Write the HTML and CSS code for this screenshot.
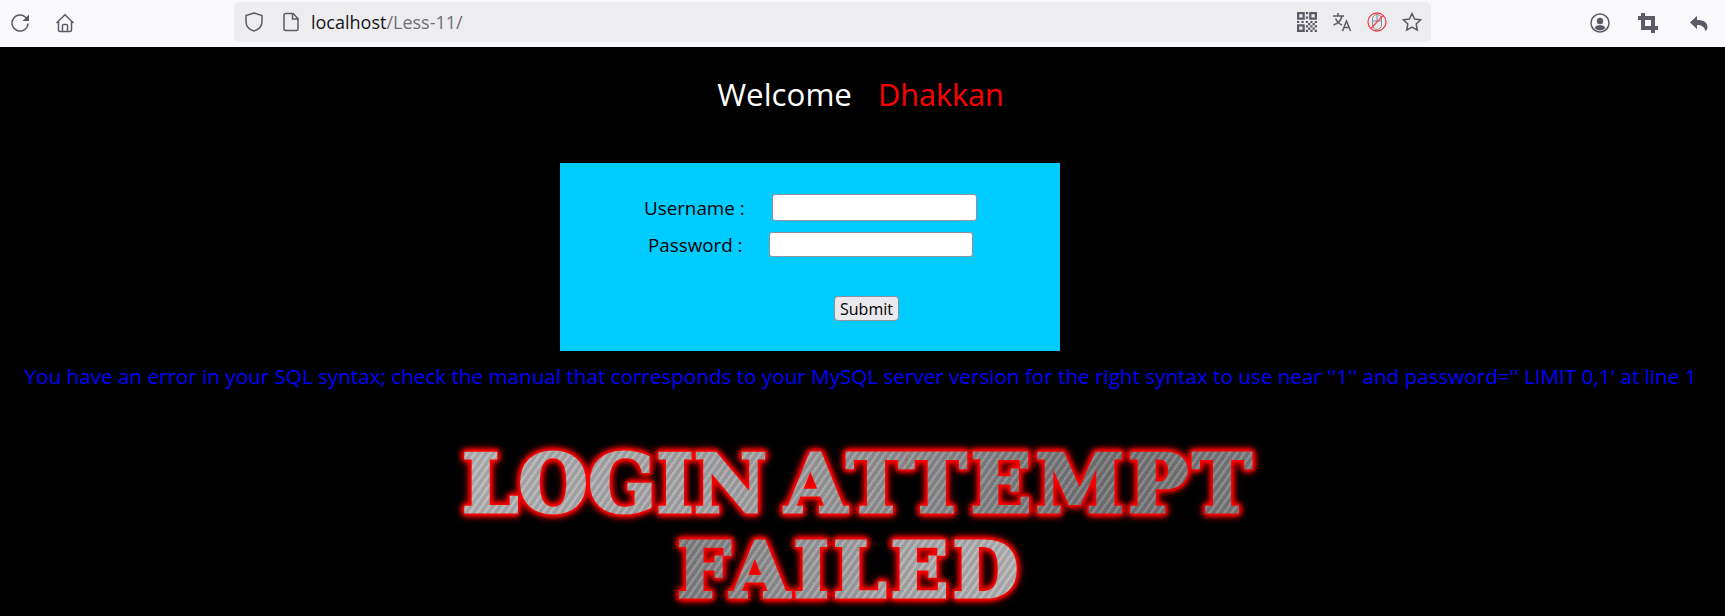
FILE: index.html
```html
<!DOCTYPE html>
<html lang="en">
<head>
    <meta charset="UTF-8">
    <title>Less-11</title>
    <link rel="stylesheet" href="styles.css">
</head>
<body>
    <div class="toolbar">
        <svg class="icon reload" viewBox="0 0 20 20"><path d="M18 10.500a8 8 0 1 1-2.500-6.300l2.500 2.300" /><path class="fill" d="M19 1.500v6.500h-6.500z" /></svg>
        <svg class="icon home" viewBox="0 0 20 20"><path d="M1.500 10 10 1.800 18.500 10M3.500 8.500V17a1.500 1.500 0 0 0 1.500 1.500h10a1.500 1.500 0 0 0 1.500-1.500V8.500M7.500 18.500V12.500a1 1 0 0 1 1-1h3a1 1 0 0 1 1 1v6" /></svg>
        <div class="urlbar">
            <svg class="icon shield" viewBox="0 0 20 20"><path d="M10 1 2 3.500v6C2 14.500 6 17.800 10 19c4-1.200 8-4.500 8-9.500v-6z" /></svg>
            <svg class="icon page" viewBox="0 0 20 20"><path d="M3 3a1.500 1.500 0 0 1 1.500-1.500H12l5 5V17a1.500 1.500 0 0 1-1.500 1.500h-11A1.500 1.500 0 0 1 3 17zM11.500 1.500V7H17" /></svg>
            <span class="url">localhost<span class="url-path">/Less-11/</span></span>
            <div class="url-actions">
                <svg class="icon" viewBox="0 0 18 18"><path class="qr" d="M0 0h7v7H0zM2 2v3h3V2zM11 0h7v7h-7zM13 2v3h3V2zM0 11h7v7H0zM2 13v3h3v-3zM8 0h2v2H8zM8 4h2v2H8zM8 8h2v2H8zM4 8h2v2H4zM0 8h2v2H0zM12 8h2v2h-2zM16 8h2v2h-2zM8 12h2v2H8zM10 10h2v2h-2zM14 10h2v2h-2zM12 12h2v2h-2zM16 12h2v2h-2zM10 14h2v2h-2zM14 14h2v2h-2zM8 16h2v2H8zM12 16h2v2h-2zM16 16h2v2h-2z" /></svg>
                <svg class="icon translate" viewBox="0 0 20 20"><path d="M1 4h11M6 1v3M10 4c-1 4-4 7.500-8.500 9M3.500 6.500c1.500 3 4 5.500 6.500 6.500M10.500 19l4-10 4 10M12 15.500h5" /></svg>
                <svg class="icon mouse" viewBox="0 0 20 20"><rect class="mouse-body" x="5.500" y="2.500" width="9" height="15" rx="4.500" /><path class="mouse-line" d="M10 3v6M5.500 9h9" /><circle class="no-ring" cx="10" cy="10" r="9" /><path class="no-ring" d="M3.800 16.500 16.200 3.500" /></svg>
                <svg class="icon star" viewBox="0 0 20 20"><path d="m10 1.500 2.600 5.500 6 .8-4.400 4.200 1.100 6L10 15.100 4.700 18l1.100-6L1.400 7.800l6-.8z" /></svg>
            </div>
        </div>
        <svg class="icon profile" viewBox="0 0 20 20"><circle cx="10" cy="10" r="9" /><circle class="fill" cx="10" cy="8" r="3.200" /><path class="fill" d="M4.500 15c1-2 3-3 5.500-3s4.500 1 5.500 3a7.500 7.500 0 0 1-11 0z" /></svg>
        <svg class="icon crop" viewBox="0 0 20 20"><path class="thick" d="M5 0v15h15M0 5h15v15" /></svg>
        <svg class="icon back" viewBox="0 0 20 20"><path class="fill" d="M8 2 1 8.500 8 15v-4c4 0 7 1 8.500 6 1.500-1 2-2.500 2-4 0-4.500-4-7-10.500-7z" /></svg>
    </div>

    <div class="welcome">Welcome<span class="name">Dhakkan</span></div>

    <form class="login-box">
        <div class="row row-user">
            <label class="user-label">Username :</label>
            <input class="text-input user-input" type="text">
        </div>
        <div class="row row-pass">
            <label class="pass-label">Password :</label>
            <input class="text-input pass-input" type="password">
        </div>
        <input class="submit" type="submit" value="Submit">
    </form>

    <div class="sql-error">You have an error in your SQL syntax; check the manual that corresponds to your MySQL server version for the right syntax to use near ''1'' and password='' LIMIT 0,1' at line 1</div>

    <div class="failed">
        <div class="failed-line line-one">LOGIN <span class="word-attempt">ATTEMPT</span></div>
        <div class="failed-line line-two">FAILED</div>
    </div>
</body>
</html>
```

FILE: styles.css
```css
* {
    box-sizing: border-box;
}
html, body {
    height: 616px;
    overflow: hidden;
}
body {
    margin: 0;
    background-color: #000;
    font-family: "Open Sans", "Noto Sans", sans-serif;
}

/* browser bar */
.toolbar {
    height: 47px;
    background-color: #f9f9fb;
    display: flex;
    align-items: flex-start;
    padding-top: 2px;
}
.icon {
    width: 20px;
    height: 20px;
    flex: none;
    fill: none;
    stroke: #5b5b66;
    stroke-width: 1.5;
}
.icon .fill {
    fill: #5b5b66;
    stroke: none;
}
.reload {
    margin: 11px 0 0 10px;
}
.home {
    margin: 11px 0 0 25px;
}
.urlbar {
    width: 1197px;
    height: 40px;
    margin-left: 159px;
    background-color: #ededf0;
    border-radius: 5px;
    display: flex;
    align-items: center;
    padding-left: 10px;
}
.page {
    margin-left: 17px;
}
.url {
    margin-left: 10px;
    font-size: 18px;
    color: #15141a;
}
.url-path {
    color: #6f6f78;
}
.url-actions {
    margin-left: auto;
    display: flex;
    gap: 15px;
    padding-right: 9px;
}
.qr {
    fill: #5b5b66;
    stroke: none;
}
.mouse-body {
    fill: #e8e8ea;
    stroke: #8a8a92;
    stroke-width: 1;
}
.mouse-line {
    stroke: #6d8cc0;
    stroke-width: 1;
}
.no-ring {
    stroke: #f0444a;
    stroke-width: 1.3;
}
.profile {
    margin: 11px 0 0 159px;
}
.crop {
    margin: 11px 0 0 28px;
}
.thick {
    stroke-width: 4;
}
.back {
    margin: 12px 0 0 31px;
}

/* page */
.welcome {
    margin-top: 25px;
    height: 44px;
    line-height: 44px;
    padding-right: 4px;
    text-align: center;
    font-size: 31.3px;
    color: #fff;
}
.name {
    margin-left: 26px;
    font-size: 30.6px;
    color: #f00;
}
.login-box {
    width: 500px;
    height: 188px;
    margin: 47px 0 0 560px;
    background-color: #0cf;
    padding-top: 31px;
}
.row {
    display: flex;
    align-items: center;
    color: #000;
    font-size: 18.8px;
}
.row-user {
    height: 27px;
    padding-left: 84px;
}
.row-pass {
    height: 25px;
    margin-top: 11px;
    padding-left: 88px;
}
.user-label {
    width: 128px;
}
.pass-label {
    width: 121px;
}
.text-input {
    height: 100%;
    padding: 0 3px;
    background-color: #fff;
    border: 1px solid #8f8f9d;
    border-radius: 3px;
}
.user-input {
    width: 205px;
}
.pass-input {
    width: 204px;
}
.submit {
    display: block;
    width: 65px;
    height: 25px;
    margin: 39px 0 0 274px;
    padding: 0;
    font-family: "Open Sans", sans-serif;
    font-size: 16px;
    color: #000;
    background-color: #e9e9ed;
    border: 1px solid #8f8f9d;
    border-radius: 4px;
}
.sql-error {
    margin-top: 11px;
    height: 28px;
    line-height: 28px;
    padding-right: 4px;
    text-align: center;
    white-space: nowrap;
    font-size: 20.65px;
    color: #00f;
}

/* the failed banner, brushed metal letters with a red glow */
.failed {
    margin-top: 54px;
    font-family: "DejaVu Serif", serif;
    font-weight: bold;
    filter: drop-shadow(0 0 1px #f00) drop-shadow(0 0 2px #f00) drop-shadow(0 0 2px #f00) drop-shadow(0 0 3px #f00);
}
.failed-line {
    width: fit-content;
    padding: 0 4px;
    color: transparent;
    -webkit-text-stroke: 3px transparent;
    -webkit-background-clip: text;
    background-clip: text;
    white-space: nowrap;
}
.line-one {
    margin-left: 458px;
    font-size: 80px;
    line-height: 80px;
    word-spacing: -10px;
    background-image:
        repeating-linear-gradient(125deg, rgba(255,255,255,.14) 0 2px, rgba(0,0,0,.08) 3px 6px),
        linear-gradient(90deg, #b4b4b6, #a0a0a2 40%, #737375 80%, #7c7c7e);
}
.word-attempt {
    letter-spacing: 4px;
}
.line-two {
    margin: 9px 0 0 673px;
    font-size: 76px;
    line-height: 76px;
    letter-spacing: 4px;
    background-image:
        repeating-linear-gradient(125deg, rgba(255,255,255,.14) 0 2px, rgba(0,0,0,.08) 3px 6px),
        linear-gradient(90deg, #7d7d7f, #a8a8aa 60%, #b4b4b6);
}
```
